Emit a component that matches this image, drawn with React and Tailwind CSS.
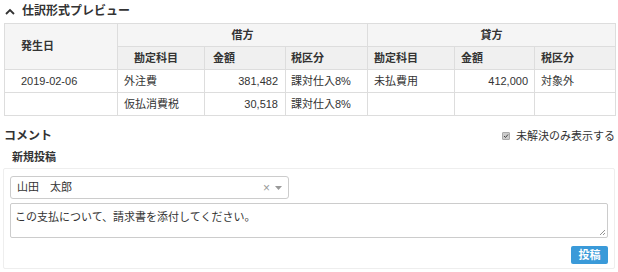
import React from "react";

const font = { fontFamily: '"Liberation Sans", "Noto Sans CJK JP", sans-serif' };

const rows = [
  {
    date: "2019-02-06",
    dr: { account: "外注費", amount: "381,482", tax: "課対仕入8%" },
    cr: { account: "未払費用", amount: "412,000", tax: "対象外" },
  },
  {
    date: "",
    dr: { account: "仮払消費税", amount: "30,518", tax: "課対仕入8%" },
    cr: { account: "", amount: "", tax: "" },
  },
];

const App = () => {
  return (
    <div className="w-[618px] h-[272px] bg-white text-[#333] overflow-hidden" style={font}>
      {/* journal preview */}
      <div className="flex items-center h-[21px] pl-[5px] pt-[1px]">
        <svg width="10" height="7" viewBox="0 0 10 7" className="mr-[7px]">
          <path d="M1 6 L5 2 L9 6" fill="none" stroke="#333" strokeWidth="1.8" />
        </svg>
        <span className="text-[12px] font-bold leading-none">仕訳形式プレビュー</span>
      </div>
      <div className="pl-[4px] pr-[3px] pt-[2px]">
        <table className="w-[611px] border-collapse table-fixed text-[11px]">
          <colgroup>
            <col className="w-[113px]" />
            <col className="w-[87px]" />
            <col className="w-[81px]" />
            <col className="w-[82px]" />
            <col className="w-[87px]" />
            <col className="w-[80px]" />
            <col className="w-[81px]" />
          </colgroup>
          <thead>
            <tr className="h-[23px] bg-[#f5f5f5]">
              <th rowSpan={2} className="border border-[#ddd] text-left pl-4 font-bold">発生日</th>
              <th colSpan={3} className="border border-[#ddd] font-bold">借方</th>
              <th colSpan={3} className="border border-[#ddd] font-bold">貸方</th>
            </tr>
            <tr className="h-[23px] bg-[#f0f0f0]">
              <th className="border border-[#ddd] text-left pl-4 font-bold">勘定科目</th>
              <th className="border border-[#ddd] text-left pl-2 font-bold">金額</th>
              <th className="border border-[#ddd] text-left pl-[5px] font-bold">税区分</th>
              <th className="border border-[#ddd] text-left pl-[6px] font-bold">勘定科目</th>
              <th className="border border-[#ddd] text-left pl-[6px] font-bold">金額</th>
              <th className="border border-[#ddd] text-left pl-[6px] font-bold">税区分</th>
            </tr>
          </thead>
          <tbody>
            {rows.map((r, i) => (
              <tr key={i} className="h-[23px]">
                <td className="border border-[#ddd] pl-4">{r.date}</td>
                <td className="border border-[#ddd] pl-[6px]">{r.dr.account}</td>
                <td className="border border-[#ddd] text-right pr-[7px]">{r.dr.amount}</td>
                <td className="border border-[#ddd] pl-[5px]">{r.dr.tax}</td>
                <td className="border border-[#ddd] pl-[6px]">{r.cr.account}</td>
                <td className="border border-[#ddd] text-right pr-[6px]">{r.cr.amount}</td>
                <td className="border border-[#ddd] pl-[6px]">{r.cr.tax}</td>
              </tr>
            ))}
          </tbody>
        </table>
      </div>

      {/* comments */}
      <div className="flex items-center justify-between pl-[4px] pr-[3px] mt-[14px]">
        <span className="text-[12px] font-bold leading-none">コメント</span>
        <label className="flex items-center text-[11px] leading-none">
          <span className="w-[8px] h-[8px] bg-[#ccc] border border-[#aaa] rounded-[1px] mr-[6px] flex items-center justify-center">
            <svg width="6" height="6" viewBox="0 0 6 6">
              <path d="M1 3 L2.5 4.5 L5 1.5" fill="none" stroke="#444" strokeWidth="1" />
            </svg>
          </span>
          未解決のみ表示する
        </label>
      </div>
      <div className="pl-[12px] mt-[10px] text-[11px] font-bold leading-none">新規投稿</div>
      <div className="mx-[3px] mt-[5px] h-[101px] border border-[#eee] rounded-[2px] px-[6px] pt-[7px]">
        <div className="w-[279px] h-[23px] border border-[#ccc] rounded-[3px] flex items-center pl-[6px] pr-[6px] text-[11px]">
          <span className="flex-1">山田　太郎</span>
          <span className="text-[#999] text-[12px] mr-[5px] leading-none">×</span>
          <svg width="7" height="4" viewBox="0 0 7 4">
            <path d="M0 0 L7 0 L3.5 4 Z" fill="#999" />
          </svg>
        </div>
        <div className="mt-[4px] w-[598px] h-[35px] border border-[#ccc] rounded-[2px] px-[4px] pt-[5px] text-[11px] relative">
          この支払について、請求書を添付してください。
          <svg width="7" height="7" viewBox="0 0 7 7" className="absolute right-[1px] bottom-[1px]">
            <path d="M6 1 L1 6 M6 4 L4 6" stroke="#777" strokeWidth="0.8" />
          </svg>
        </div>
        <div className="flex justify-end mt-[8px]">
          <button className="w-[37px] h-[18px] bg-[#3a9ad9] text-white text-[11px] font-bold rounded-[2px] leading-none">
            投稿
          </button>
        </div>
      </div>
    </div>
  );
};

export default App;
